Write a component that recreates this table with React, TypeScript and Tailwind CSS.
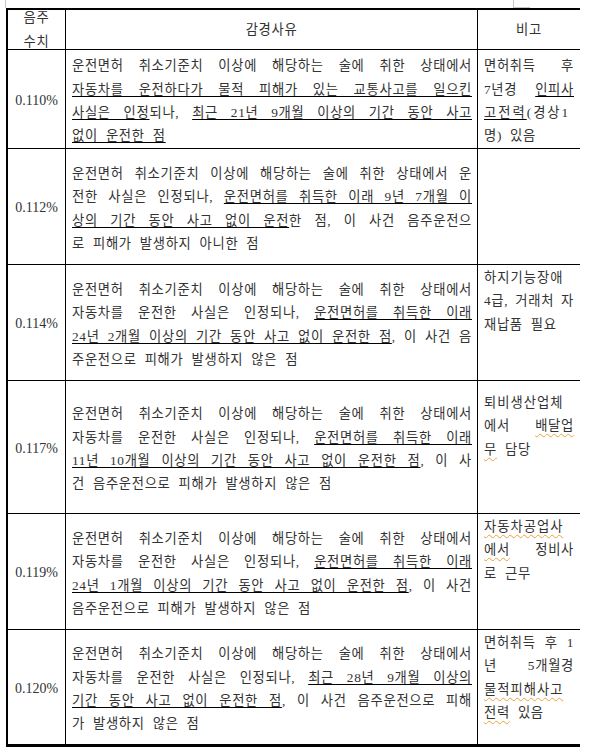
import type { ReactNode } from "react"

// one justified line (text-align-last so a single line spreads out)
function J({ children }: { children: ReactNode }) {
  return <div className="text-justify [text-align-last:justify]">{children}</div>
}

// last line of a paragraph, left aligned
function L({ children }: { children: ReactNode }) {
  return <div className="text-left [word-spacing:4px]">{children}</div>
}

function U({ children }: { children: ReactNode }) {
  return (
    <span className="underline decoration-black decoration-1 underline-offset-[2px]">
      {children}
    </span>
  )
}

// spell-check squiggle
function W({ children }: { children: ReactNode }) {
  return (
    <span className="underline decoration-wavy decoration-[#e9a23b] decoration-1 underline-offset-[3px]">
      {children}
    </span>
  )
}

const FIRST = "운전면허 취소기준치 이상에 해당하는 술에 취한 상태에서"

const rows = [
  {
    pct: "0.110%",
    h: "h-[99px]",
    noteCls: "justify-center pt-[4px]",
    main: (
      <>
        <J>{FIRST}</J>
        <J>
          <U>자동차를 운전하다가 물적 피해가 있는 교통사고를 일으킨</U>
        </J>
        <J>
          <U>사실은 인정</U>되나, <U>최근 21년 9개월 이상의 기간 동안 사고</U>
        </J>
        <L>
          <U>없이 운전한 점</U>
        </L>
      </>
    ),
    note: (
      <>
        <J>면허취득 후</J>
        <J>
          7년경 <U>인피사</U>
        </J>
        <J>
          <span className="tracking-[2px]">
            <U>고전력</U>(경상1
          </span>
        </J>
        <L>명) 있음</L>
      </>
    ),
  },
  {
    pct: "0.112%",
    h: "h-[116px]",
    noteCls: "justify-start",
    main: (
      <>
        <J>{FIRST} 운</J>
        <J>
          전한 사실은 인정되나, <U>운전면허를 취득한 이래 9년 7개월 이</U>
        </J>
        <J>
          <U>상의 기간 동안 사고 없이 운전</U>한 점, 이 사건 음주운전으
        </J>
        <L>로 피해가 발생하지 아니한 점</L>
      </>
    ),
    note: null,
  },
  {
    pct: "0.114%",
    h: "h-[116px]",
    noteCls: "justify-start pt-[1px]",
    main: (
      <>
        <J>{FIRST}</J>
        <J>
          자동차를 운전한 사실은 인정되나, <U>운전면허를 취득한 이래</U>
        </J>
        <J>
          <U>24년 2개월 이상의 기간 동안 사고 없이 운전한 점</U>, 이 사건 음
        </J>
        <L>주운전으로 피해가 발생하지 않은 점</L>
      </>
    ),
    note: (
      <>
        <J>
          <span className="tracking-[1px]">하지기능장애</span>
        </J>
        <J>4급, 거래처 자</J>
        <L>재납품 필요</L>
      </>
    ),
  },
  {
    pct: "0.117%",
    h: "h-[133px]",
    noteCls: "justify-start pt-[10px]",
    main: (
      <>
        <J>{FIRST}</J>
        <J>
          자동차를 운전한 사실은 인정되나, <U>운전면허를 취득한 이래</U>
        </J>
        <J>
          <U>11년 10개월 이상의 기간 동안 사고 없이 운전한 점</U>, 이 사
        </J>
        <L>건 음주운전으로 피해가 발생하지 않은 점</L>
      </>
    ),
    note: (
      <>
        <J>
          <span className="tracking-[1px]">퇴비생산업체</span>
        </J>
        <J>
          에서 <W>배달업</W>
        </J>
        <L>
          <W>무</W> 담당
        </L>
      </>
    ),
  },
  {
    pct: "0.119%",
    h: "h-[116px]",
    noteCls: "justify-start pt-[1px]",
    main: (
      <>
        <J>{FIRST}</J>
        <J>
          자동차를 운전한 사실은 인정되나, <U>운전면허를 취득한 이래</U>
        </J>
        <J>
          <U>24년 1개월 이상의 기간 동안 사고 없이 운전한 점</U>, 이 사건
        </J>
        <L>음주운전으로 피해가 발생하지 않은 점</L>
      </>
    ),
    note: (
      <>
        <J>
          <span className="tracking-[1px]">
            <W>자동차공업사</W>
          </span>
        </J>
        <J>
          <W>에서</W> 정비사
        </J>
        <L>로 근무</L>
      </>
    ),
  },
  {
    pct: "0.120%",
    h: "h-[114px] border-b-0",
    noteCls: "justify-start pt-[1px]",
    main: (
      <>
        <J>{FIRST}</J>
        <J>
          자동차를 운전한 사실은 인정되나, <U>최근 28년 9개월 이상의</U>
        </J>
        <J>
          <U>기간 동안 사고 없이 운전한 점</U>, 이 사건 음주운전으로 피해
        </J>
        <L>가 발생하지 않은 점</L>
      </>
    ),
    note: (
      <>
        <J>면허취득 후 1</J>
        <J>년 5개월경</J>
        <J>
          <span className="tracking-[1px]">
            <W>물적피해사고</W>
          </span>
        </J>
        <L>
          <W>전력</W> 있음
        </L>
      </>
    ),
  },
]

export default function App() {
  return (
    <div className="relative min-h-[752px] w-[595px] bg-white pl-[6px] pt-[8px] text-[13.3px] leading-[23.3px] tracking-[0.7px] text-[#333] [font-family:'Liberation_Serif','Noto_Sans_CJK_KR',serif]">
      {/* editor corner marks */}
      <div className="absolute left-[5px] top-0 h-[8px] w-px bg-[#c8c8c8]" />
      <div className="absolute left-[513px] top-0 h-[8px] w-px bg-[#c8c8c8]" />
      <div className="absolute left-[513px] top-[7px] h-px w-[17px] bg-[#c8c8c8]" />

      <div className="w-[574px] border-b-[3px] border-l-2 border-t-2 border-black">
        <div className="flex h-[40px] border-b border-black">
          <div className="flex w-[58px] flex-col items-center justify-center border-r border-black">
            <div>음주</div>
            <div>수치</div>
          </div>
          <div className="flex w-[412px] items-center justify-center border-r border-black">
            감경사유
          </div>
          <div className="flex flex-1 items-center justify-center">비고</div>
        </div>

        {rows.map((r) => (
          <div key={r.pct} className={`flex border-b border-black ${r.h}`}>
            <div className="flex w-[58px] items-center justify-center border-r border-black pt-[3px] text-[14px] tracking-normal">
              {r.pct}
            </div>
            <div className="flex w-[412px] flex-col justify-center border-r border-black pl-[6px] pr-[5px] pt-[4px]">
              {r.main}
            </div>
            <div className={`flex flex-1 flex-col pl-[6px] pr-[6px] ${r.noteCls}`}>{r.note}</div>
          </div>
        ))}
      </div>
    </div>
  )
}
